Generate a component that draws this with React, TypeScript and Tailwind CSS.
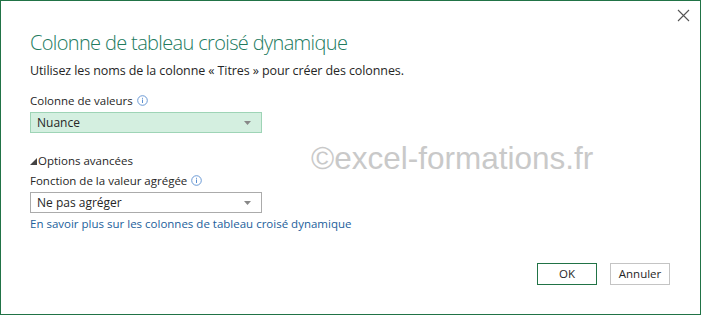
import React from 'react';

const font = { fontFamily: '"Open Sans", "Noto Sans", sans-serif' };

const InfoIcon = () => (
  <svg width="11" height="11" viewBox="0 0 11 11" className="inline-block ml-[4px] -mt-[2px]">
    <circle cx="5.5" cy="5.5" r="4.8" fill="none" stroke="#5b8fd0" strokeWidth="0.9" />
    <rect x="5" y="4.5" width="1" height="3.5" fill="#5b8fd0" />
    <rect x="5" y="2.8" width="1" height="1" fill="#5b8fd0" />
  </svg>
);

const Caret = () => (
  <svg width="7" height="4" viewBox="0 0 7 4">
    <path d="M0 0h7L3.5 4z" fill="#888" />
  </svg>
);

const Select = ({ value, active }: { value: string; active?: boolean }) => (
  <div
    className={`w-[232px] h-[21px] flex items-center justify-between pl-[6px] pr-[10px] border text-[12px] text-[#262626] ${
      active ? 'bg-[#d4efe0] border-[#9ed4b6]' : 'bg-white border-[#ababab]'
    }`}
  >
    <span>{value}</span>
    <Caret />
  </div>
);

export default function App() {
  return (
    <div
      className="relative w-[701px] h-[315px] bg-white border border-[#217346] overflow-hidden"
      style={font}
    >
      {/* close */}
      <svg className="absolute top-[8px] right-[10px]" width="13" height="13" viewBox="0 0 13 13">
        <path d="M1 1l11 11M12 1L1 12" stroke="#555" strokeWidth="1.1" />
      </svg>

      {/* watermark */}
      <div
        className="absolute left-[310px] top-[137px] text-[31.5px] leading-[40px] text-[#c9c9c9]"
        style={{ fontFamily: '"Liberation Sans", Arial, sans-serif' }}
      >
        ©excel-formations.fr
      </div>

      <div className="pl-[29px] pt-[29px] flex flex-col">
        <h1 className="text-[20px] leading-[26px] font-light text-[#217a5e] tracking-[-0.65px]">
          Colonne de tableau croisé dynamique
        </h1>
        <p className="mt-[6px] text-[12.5px] leading-[18px] text-[#262626] tracking-[-0.1px]">
          Utilisez les noms de la colonne « Titres » pour créer des colonnes.
        </p>

        <div className="mt-[13px] text-[11.5px] leading-[16px] text-[#262626]">
          Colonne de valeurs
          <InfoIcon />
        </div>
        <div className="mt-[3px]">
          <Select value="Nuance" active />
        </div>

        <div className="mt-[20px] flex items-center text-[11.5px] leading-[16px] text-[#262626]">
          <svg width="7" height="7" viewBox="0 0 7 7" className="mr-[1px]">
            <path d="M7 0v7H0z" fill="#444" />
          </svg>
          Options avancées
        </div>
        <div className="mt-[4px] text-[11.5px] leading-[16px] text-[#262626]">
          Fonction de la valeur agrégée
          <InfoIcon />
        </div>
        <div className="mt-[3px]">
          <Select value="Ne pas agréger" />
        </div>
        <a className="mt-[3px] text-[11.5px] leading-[16px] text-[#22609b]">
          En savoir plus sur les colonnes de tableau croisé dynamique
        </a>
      </div>

      <div className="absolute right-[30px] bottom-[29px] flex gap-[13px]">
        <button className="w-[60px] h-[22px] border border-[#217346] bg-white text-[11.5px] text-[#262626]">
          OK
        </button>
        <button className="w-[60px] h-[22px] border border-[#c4c4c4] bg-white text-[11.5px] text-[#262626]">
          Annuler
        </button>
      </div>
    </div>
  );
}
